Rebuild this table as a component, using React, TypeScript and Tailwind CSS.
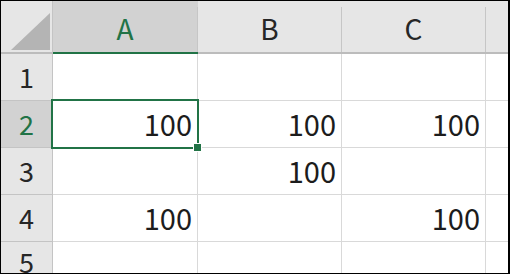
const cols = [
  { key: "A", w: "w-[145px]", selected: true },
  { key: "B", w: "w-[144px]", selected: false },
  { key: "C", w: "w-[144px]", selected: false },
]

const rows: { n: number; h: string; values: (string | null)[] }[] = [
  { n: 1, h: "h-[47px]", values: [null, null, null] },
  { n: 2, h: "h-[47px]", values: ["100", "100", "100"] },
  { n: 3, h: "h-[47px]", values: [null, "100", null] },
  { n: 4, h: "h-[47px]", values: ["100", null, "100"] },
  { n: 5, h: "flex-1", values: [null, null, null] },
]

const font = { fontFamily: '"Noto Sans CJK JP", "Noto Sans", sans-serif' }

export default function App() {
  return (
    <div
      className="relative w-[510px] h-[274px] border-t border-l border-b border-r-2 border-black bg-white overflow-hidden flex flex-col"
      style={font}
    >
      {/* column headers */}
      <div className="flex h-[53px] shrink-0 bg-[#e6e6e6]">
        <div className="w-[52px] shrink-0 border-r border-b-2 border-r-[#c4c4c4] border-b-[#bcbcbc] relative">
          <svg className="absolute left-0 top-0" width="51" height="51" viewBox="0 0 51 51">
            <polygon points="10,49 49,49 49,12" fill="#b4b4b4" />
          </svg>
        </div>
        {cols.map((c) => (
          <div
            key={c.key}
            className={`${c.w} shrink-0 flex border-b-2 ${
              c.selected ? "bg-[#d2d2d2] border-b-[#217346]" : "border-b-[#bcbcbc]"
            }`}
          >
            <div
              className={`flex-1 flex items-center justify-center pt-[3px] text-[28px] ${
                c.selected ? "text-[#217346]" : "text-[#262626]"
              }`}
            >
              {c.key}
            </div>
            <div className="w-px mt-[6px] bg-[#c6c6c6]" />
          </div>
        ))}
        <div className="flex-1 border-b-2 border-b-[#bcbcbc]" />
      </div>

      {/* rows */}
      {rows.map((r) => {
        const rowSel = r.n === 2
        return (
          <div key={r.n} className={`flex ${r.h} shrink-0`}>
            <div
              className={`w-[52px] shrink-0 flex items-center justify-center border-r border-b text-[27px] ${
                rowSel
                  ? "bg-[#d2d2d2] text-[#217346] border-r-[#217346] border-b-[#c4c4c4]"
                  : "bg-[#e6e6e6] text-[#262626] border-r-[#c4c4c4] border-b-[#c4c4c4]"
              }`}
            >
              {r.n}
            </div>
            {cols.map((c, i) => (
              <div
                key={c.key}
                className={`${c.w} shrink-0 relative flex items-center justify-end pr-[5px] border-r border-b border-[#d9d9d9] text-[29px] text-[#1c1c1c]`}
              >
                {r.values[i]}
              </div>
            ))}
            <div className="flex-1 border-b border-[#d9d9d9]" />
          </div>
        )
      })}

      {/* active cell A2 */}
      <div className="absolute left-[50px] top-[98px] w-[148px] h-[50px] border-2 border-[#217346] pointer-events-none" />
      <div className="absolute left-[192px] top-[142px] w-[9px] h-[9px] bg-[#217346] border border-white" />
    </div>
  )
}
